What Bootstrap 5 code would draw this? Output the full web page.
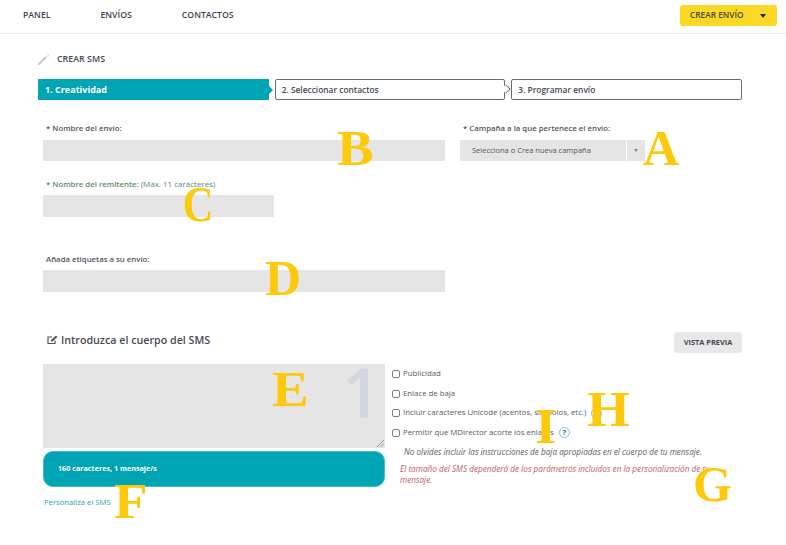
<!DOCTYPE html>
<html lang="es"><head><meta charset="utf-8"><title>Crear SMS</title>
<link href="https://cdn.jsdelivr.net/npm/bootstrap@5.3.0/dist/css/bootstrap.min.css" rel="stylesheet">
<style>
html,body{height:545px;overflow:hidden}
body{font-family:"Open Sans","Liberation Sans",sans-serif;color:#444b55;background:#fff;position:relative;font-size:8px}
.topbar{height:34px;border-bottom:1px solid #e8e8e8;padding:5px 9px 0 23px;align-items:flex-start}
.toplink{font-size:8.7px;font-weight:600;color:#3f4650;line-height:21px;text-decoration:none}
.toplinks{gap:50px}
.btn-crear{width:97px;height:21px;background:#fdd825;border:0;border-radius:3px;font-size:8.3px;font-weight:600;color:#4a4a20;padding:0 0 0 10px;display:flex;align-items:center;justify-content:space-between}
.caretdn{border:3.5px solid transparent;border-top:4px solid #222;border-bottom:0;margin-right:11px}
.pagebody{padding:0 44px 0 38px}
.crumb{height:45px;padding-top:4px;gap:7px;font-size:8.9px;font-weight:600;color:#444b55;align-items:center}
.stepsrow{gap:6px;height:21px}
.stepitem{width:231px;height:21px;border:1px solid #6b6f75;border-radius:2px;font-size:8.4px;font-weight:600;padding-left:6px;line-height:19px;color:#444b55;position:relative}
.stepitem.on{background:#00a5b3;border-color:#00a5b3;color:#fff;font-size:9px;font-weight:700;padding-left:6px;border-radius:0}
.stepitem.on::after{content:"";position:absolute;right:-5px;top:6px;border:4px solid transparent;border-left:4px solid #00a5b3;border-right:0}
.stepgt{position:absolute;right:-6px;top:5px;width:8px;height:8px;border-top:1px solid #555;border-right:1px solid #555;transform:rotate(45deg) scale(.8);background:#fff}
.formarea{padding-left:5px}
.lbl{font-size:7.8px;font-weight:600;color:#4f565f;line-height:11px;padding-left:3px;margin-bottom:6px}
.lbl.ok{color:#5e8a6c}
.lbl.ok span{font-weight:400;font-size:8px}
.lbl.tight{margin-bottom:5px}
.fieldgrey{height:21px;background:#e5e5e5;border:0;border-radius:0;display:block}
.fieldgrey.tall{height:22px}
.w402{width:402px}.w231{width:231px}
.topfields{gap:15px}
.sel{width:185px;height:21px;gap:1px;font-size:7.5px;font-weight:500;color:#4f565f}
.seltxt{flex:1;background:#e5e5e5;padding-left:12px;line-height:21px}
.selbtn{width:18px;background:#e5e5e5;display:flex;align-items:center;justify-content:center}
.caretsm{border:2.5px solid transparent;border-top:3px solid #8a8a8a;border-bottom:0}
.gap1{margin-top:23px}
.gap2row{margin-top:17px}
.gap3{margin-top:37px}
.bodyhead{margin-top:40px;height:21px;padding-left:4px;align-items:center;justify-content:space-between}
.bodytitle{font-size:10.7px;font-weight:600;color:#444b55;gap:3px;align-items:center;margin-bottom:4px}
.btn-prev{width:68px;height:21px;background:#e8e8e8;border:0;border-radius:3px;font-size:7.4px;font-weight:700;color:#444b55;padding:0}
.bodyrow{margin-top:11px;gap:7px}
.leftcol{width:342px}
.tarea{height:84px;background:#e5e5e5;position:relative;display:block}
.bignum{position:absolute;right:4px;top:-2px;font-size:68px;font-weight:600;line-height:60px;color:#d2d6de;font-family:"Open Sans",sans-serif}
.grip{position:absolute;right:1px;bottom:1px}
.countbox{margin-top:3px;height:36px;background:#00a5b3;border-radius:10px;color:#fff;font-size:7.2px;font-weight:700;padding-left:14px;line-height:33px;border:1px solid #3cc0cb}
.perso{display:block;margin-top:10px;padding-left:1px;color:#2c9fb0;font-size:7.7px;line-height:11px;text-decoration:none}
.checks{width:350px}
.chkrow{height:19.7px;gap:3px;align-items:center;font-size:7.8px;color:#555b63}
.chkbox{width:8px;height:8px;border:1px solid #808080;border-radius:2px;flex:none}
.qm{width:11px;height:11px;border:1px solid #6fc9e4;border-radius:50%;font-size:7.5px;font-weight:700;line-height:9px;text-align:center;color:#4a5058;margin-left:2px;flex:none}
.note1{font-style:italic;font-size:8.2px;color:#5a6068;padding-left:12px;margin-top:3px;line-height:11px}
.note2{font-style:italic;font-size:8.2px;color:#c0625e;padding-left:8px;margin-top:6px;line-height:11px;width:330px}
.mark-letter{position:absolute;font-family:"Liberation Serif",serif;font-weight:700;font-size:50px;line-height:50px;color:#fec90b;transform-origin:left top}
.wide{transform:scaleX(1.1)}
.narrow{transform:scaleX(.85)}
.lA{left:643px;top:123px}.lB{left:337px;top:123px}.lC{left:183px;top:179px}.lD{left:265px;top:253px}
.lE{left:272px;top:364px}.lF{left:114px;top:476px}.lG{left:693px;top:459px}.lH{left:587px;top:384px}.lI{left:535px;top:401px}
</style></head>
<body>
<nav class="topbar d-flex justify-content-between">
  <div class="toplinks d-flex"><a class="toplink" href="#">PANEL</a><a class="toplink" href="#">ENVÍOS</a><a class="toplink" href="#">CONTACTOS</a></div>
  <button class="btn-crear" type="button">CREAR ENVÍO<span class="caretdn"></span></button>
</nav>
<main class="pagebody">
  <div class="crumb d-flex">
    <svg width="12" height="12" viewBox="0 0 12 12"><path d="M1 11 7.5 4.5" stroke="#c9c9c9" stroke-width="2" stroke-linecap="round"/><path d="M9 0v2M11.5 3H10M8 3.5 9 2.5M11 1 10 2M10 5 9.4 4.4" stroke="#d6d6d6" stroke-width=".8"/></svg>
    <span>CREAR SMS</span>
  </div>
  <div class="stepsrow d-flex">
    <div class="stepitem on">1. Creatividad</div>
    <div class="stepitem">2. Seleccionar contactos<span class="stepgt"></span></div>
    <div class="stepitem">3. Programar envío</div>
  </div>
  <div class="formarea">
    <div class="d-flex topfields gap1">
      <div><div class="lbl">* Nombre del envío:</div><div class="fieldgrey w402"></div></div>
      <div><div class="lbl">* Campaña a la que pertenece el envío:</div>
        <div class="sel d-flex"><div class="seltxt">Selecciona o Crea nueva campaña</div><div class="selbtn"><span class="caretsm"></span></div></div>
      </div>
    </div>
    <div class="gap2row"><div class="lbl ok tight">* Nombre del remitente: <span>(Máx. 11 carácteres)</span></div><div class="fieldgrey tall w231"></div></div>
    <div class="gap3"><div class="lbl tight">Añada etiquetas a su envío:</div><div class="fieldgrey tall w402"></div></div>
    <div class="bodyhead d-flex">
      <div class="bodytitle d-flex">
        <svg width="11" height="10" viewBox="0 0 11 10"><path d="M8 5.5V8.5H1V2H5" fill="none" stroke="#555" stroke-width="1.2"/><path d="M4 5 9 0.5 10.5 2 5.5 6.5H4z" fill="#555"/></svg>
        <span>Introduzca el cuerpo del SMS</span>
      </div>
      <button class="btn-prev" type="button">VISTA PREVIA</button>
    </div>
    <div class="bodyrow d-flex">
      <div class="leftcol">
        <div class="tarea"><span class="bignum">1</span>
          <svg class="grip" width="7" height="7" viewBox="0 0 7 7"><path d="M0 7 7 0M3.5 7 7 3.5" stroke="#777" stroke-width=".8"/></svg></div>
        <div class="countbox">160 caracteres, 1 mensaje/s</div>
        <a class="perso" href="#">Personaliza el SMS</a>
      </div>
      <div class="checks">
        <div class="chkrow d-flex"><span class="chkbox"></span>Publicidad</div>
        <div class="chkrow d-flex"><span class="chkbox"></span>Enlace de baja</div>
        <div class="chkrow d-flex"><span class="chkbox"></span>Incluir caracteres Unicode (acentos, símbolos, etc.)<span class="qm">?</span></div>
        <div class="chkrow d-flex"><span class="chkbox"></span>Permitir que MDirector acorte los enlaces<span class="qm">?</span></div>
        <div class="note1">No olvides incluir las instrucciones de baja apropiadas en el cuerpo de tu mensaje.</div>
        <div class="note2">El tamaño del SMS dependerá de los parámetros incluidos en la personalización de tu mensaje.</div>
      </div>
    </div>
  </div>
</main>
<span class="mark-letter lA">A</span><span class="mark-letter wide lB">B</span><span class="mark-letter narrow lC">C</span><span class="mark-letter lD">D</span><span class="mark-letter wide lE">E</span><span class="mark-letter wide lF">F</span><span class="mark-letter lG">G</span><span class="mark-letter wide lH">H</span><span class="mark-letter wide lI">I</span>
<script src="https://cdn.jsdelivr.net/npm/bootstrap@5.3.0/dist/js/bootstrap.bundle.min.js"></script>
</body></html>
